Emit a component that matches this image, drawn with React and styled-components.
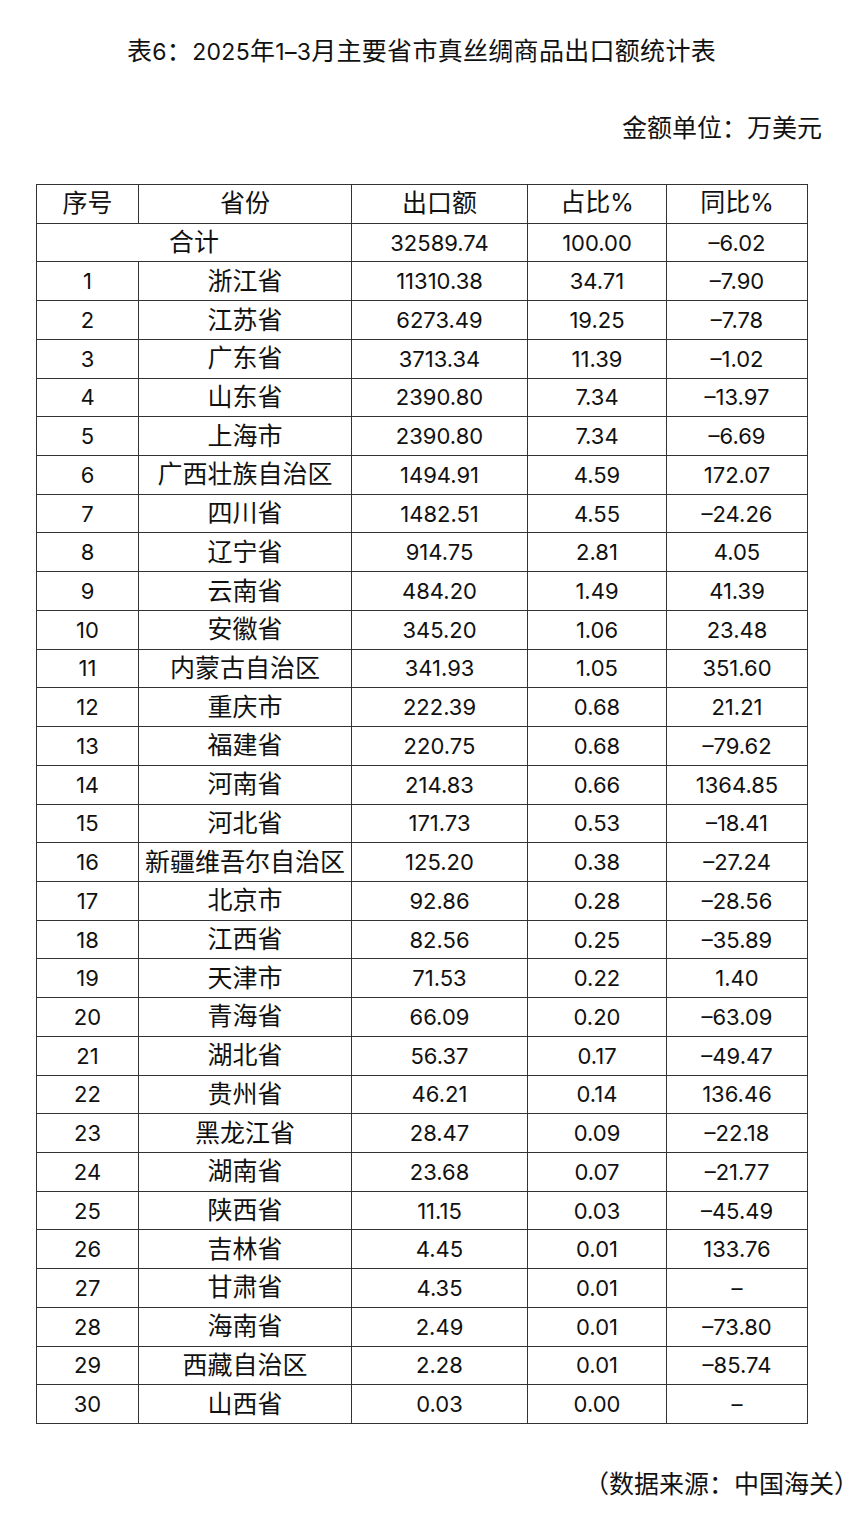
import React from "react";
import styled, { createGlobalStyle } from "styled-components";

const Global = createGlobalStyle`
  html, body { margin: 0; padding: 0; background: #fff; }
  body { color: #111; font-family: "Noto Sans CJK SC", sans-serif; }
`;

const Page = styled.div`
  width: 862px;
  display: flex;
  flex-direction: column;
  padding-top: 31px;
  box-sizing: border-box;
`;

const Title = styled.h1`
  margin: 0 0 0 36px;
  width: 771px;
  font-size: 25px;
  font-weight: 400;
  line-height: 36px;
  letter-spacing: 0.3px;
  text-align: center;
  font-family: "Noto Sans CJK SC", sans-serif;
`;

const Num = styled.span`
  font-family: "Inter", "Liberation Sans", sans-serif;
  font-size: ${(p) => p.$size || 22}px;
`;

const Unit = styled.div`
  margin-top: 38px;
  padding-right: 40px;
  text-align: right;
  font-size: 25px;
  line-height: 36px;
`;

const Table = styled.table`
  margin: 40px 0 0 36px;
  width: 771px;
  table-layout: fixed;
  border-collapse: collapse;
`;

const Th = styled.th`
  border: 1px solid #333;
  height: 38.72px;
  padding: 0 0 4px;
  box-sizing: border-box;
  font-weight: 400;
  font-size: 25px;
  line-height: 1;
  text-align: center;
  vertical-align: middle;
`;

const Td = styled.td`
  border: 1px solid #333;
  height: 38.72px;
  box-sizing: border-box;
  padding: ${(p) => (p.$num ? "0" : "0 0 4px")};
  font-size: ${(p) => (p.$num ? 22 : 25)}px;
  font-family: ${(p) =>
    p.$num ? '"Inter", "Liberation Sans", sans-serif' : '"Noto Sans CJK SC", sans-serif'};
  line-height: 1;
  text-align: center;
  vertical-align: middle;
  white-space: nowrap;
`;

const Footer = styled.div`
  margin-top: 40px;
  padding-right: 3px;
  text-align: right;
  font-size: 25px;
  line-height: 36px;
`;

const rows = [
  ["浙江省", "11310.38", "34.71", "–7.90"],
  ["江苏省", "6273.49", "19.25", "–7.78"],
  ["广东省", "3713.34", "11.39", "–1.02"],
  ["山东省", "2390.80", "7.34", "–13.97"],
  ["上海市", "2390.80", "7.34", "–6.69"],
  ["广西壮族自治区", "1494.91", "4.59", "172.07"],
  ["四川省", "1482.51", "4.55", "–24.26"],
  ["辽宁省", "914.75", "2.81", "4.05"],
  ["云南省", "484.20", "1.49", "41.39"],
  ["安徽省", "345.20", "1.06", "23.48"],
  ["内蒙古自治区", "341.93", "1.05", "351.60"],
  ["重庆市", "222.39", "0.68", "21.21"],
  ["福建省", "220.75", "0.68", "–79.62"],
  ["河南省", "214.83", "0.66", "1364.85"],
  ["河北省", "171.73", "0.53", "–18.41"],
  ["新疆维吾尔自治区", "125.20", "0.38", "–27.24"],
  ["北京市", "92.86", "0.28", "–28.56"],
  ["江西省", "82.56", "0.25", "–35.89"],
  ["天津市", "71.53", "0.22", "1.40"],
  ["青海省", "66.09", "0.20", "–63.09"],
  ["湖北省", "56.37", "0.17", "–49.47"],
  ["贵州省", "46.21", "0.14", "136.46"],
  ["黑龙江省", "28.47", "0.09", "–22.18"],
  ["湖南省", "23.68", "0.07", "–21.77"],
  ["陕西省", "11.15", "0.03", "–45.49"],
  ["吉林省", "4.45", "0.01", "133.76"],
  ["甘肃省", "4.35", "0.01", "–"],
  ["海南省", "2.49", "0.01", "–73.80"],
  ["西藏自治区", "2.28", "0.01", "–85.74"],
  ["山西省", "0.03", "0.00", "–"],
];

export default function App() {
  return (
    <>
      <Global />
      <Page>
        <Title>
          表<Num $size={23}>6</Num>：<Num $size={23}>2025</Num>年<Num $size={23}>1–3</Num>月主要省市真丝绸商品出口额统计表
        </Title>
        <Unit>金额单位：万美元</Unit>
        <Table>
          <colgroup>
            <col style={{ width: 102 }} />
            <col style={{ width: 213 }} />
            <col style={{ width: 176 }} />
            <col style={{ width: 139 }} />
            <col style={{ width: 141 }} />
          </colgroup>
          <thead>
            <tr>
              <Th>序号</Th>
              <Th>省份</Th>
              <Th>出口额</Th>
              <Th>占比<Num $size={24}>%</Num></Th>
              <Th>同比<Num $size={24}>%</Num></Th>
            </tr>
          </thead>
          <tbody>
            <tr>
              <Td colSpan={2}>合计</Td>
              <Td $num>32589.74</Td>
              <Td $num>100.00</Td>
              <Td $num>–6.02</Td>
            </tr>
            {rows.map((r, i) => (
              <tr key={i}>
                <Td $num>{i + 1}</Td>
                <Td>{r[0]}</Td>
                <Td $num>{r[1]}</Td>
                <Td $num>{r[2]}</Td>
                <Td $num>{r[3]}</Td>
              </tr>
            ))}
          </tbody>
        </Table>
        <Footer>（数据来源：中国海关）</Footer>
      </Page>
    </>
  );
}
